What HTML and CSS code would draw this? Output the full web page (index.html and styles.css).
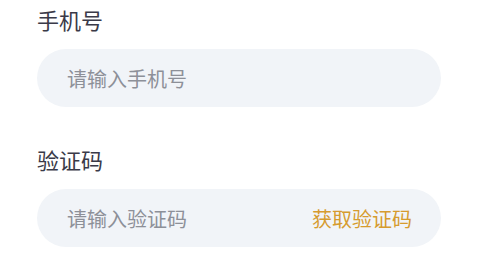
FILE: index.html
```html
<!DOCTYPE html>
<html lang="zh-CN">
<head>
<meta charset="utf-8">
<link rel="stylesheet" href="styles.css">
</head>
<body>
<form class="form">
  <div class="field">
    <label class="label">手机号</label>
    <div class="input-box">
      <span class="placeholder">请输入手机号</span>
    </div>
  </div>
  <div class="field">
    <label class="label">验证码</label>
    <div class="input-box">
      <span class="placeholder">请输入验证码</span>
      <span class="code-btn">获取验证码</span>
    </div>
  </div>
</form>
</body>
</html>
```

FILE: styles.css
```css
html, body {
  margin: 0;
  padding: 0;
  background: #ffffff;
}
body {
  font-family: "Noto Sans CJK SC", "Noto Sans", sans-serif;
  width: 481px;
  height: 258px;
  overflow: hidden;
}
.form {
  display: flex;
  flex-direction: column;
  gap: 36px;
  padding: 3px 40px 0 37px;
}
.field {
  display: flex;
  flex-direction: column;
  gap: 14px;
}
.label {
  font-size: 22px;
  line-height: 32px;
  color: #3a3a48;
}
.input-box {
  height: 58px;
  border-radius: 29px;
  background: #f1f4f8;
  display: flex;
  align-items: center;
  justify-content: space-between;
  padding: 0 29px 0 30px;
}
.placeholder {
  font-size: 20px;
  color: #8d9098;
}
.code-btn {
  font-size: 20px;
  color: #d69b2e;
}
```
